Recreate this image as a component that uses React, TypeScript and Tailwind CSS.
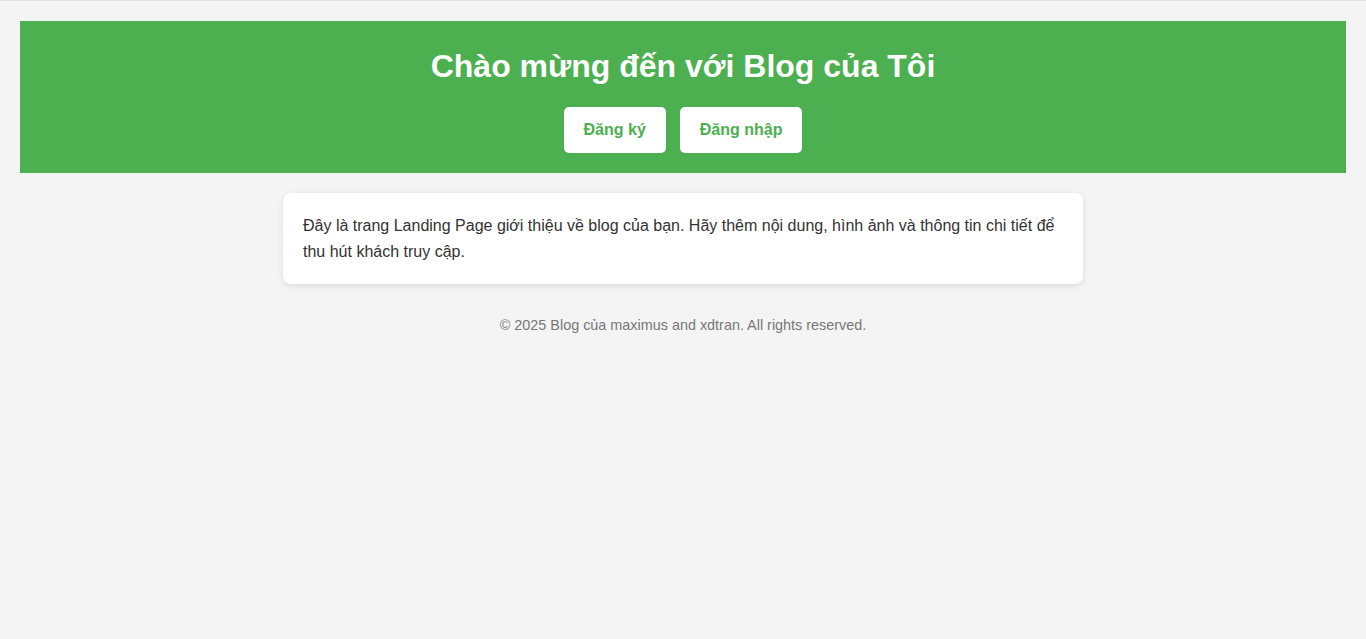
import React from "react";

export default function App() {
  return (
    <div
      className="min-h-[639px] bg-[#f4f4f4] border-t border-[#e0e0e0]"
      style={{ fontFamily: '"Liberation Sans", Arial, sans-serif' }}
    >
      <div className="px-[20px] pt-[20px]">
        <header className="bg-[#4caf50] text-white text-center pt-[27px] pb-[20px]">
          <h1 className="text-[32px] leading-[37px] font-bold m-0 mb-[22px]">
            Chào mừng đến với Blog của Tôi
          </h1>
          <div className="flex justify-center gap-[14px]">
            <a
              href="#"
              className="bg-white text-[#4caf50] font-bold text-[16px] h-[46px] px-[20px] flex items-center rounded-[5px]"
            >
              Đăng ký
            </a>
            <a
              href="#"
              className="bg-white text-[#4caf50] font-bold text-[16px] h-[46px] px-[20px] flex items-center rounded-[5px]"
            >
              Đăng nhập
            </a>
          </div>
        </header>
        <main className="w-[800px] mx-auto mt-[20px] bg-white rounded-[8px] p-[20px] shadow-[0_2px_6px_rgba(0,0,0,0.1)]">
          <p className="text-[16px] leading-[25.6px] text-[#333] m-0">
            Đây là trang Landing Page giới thiệu về blog của bạn. Hãy thêm nội dung, hình ảnh và thông tin chi tiết để thu hút khách truy cập.
          </p>
        </main>
        <footer className="text-center text-[14.4px] leading-[17px] text-[#777] mt-[33px]">
          © 2025 Blog của maximus and xdtran. All rights reserved.
        </footer>
      </div>
    </div>
  );
}
